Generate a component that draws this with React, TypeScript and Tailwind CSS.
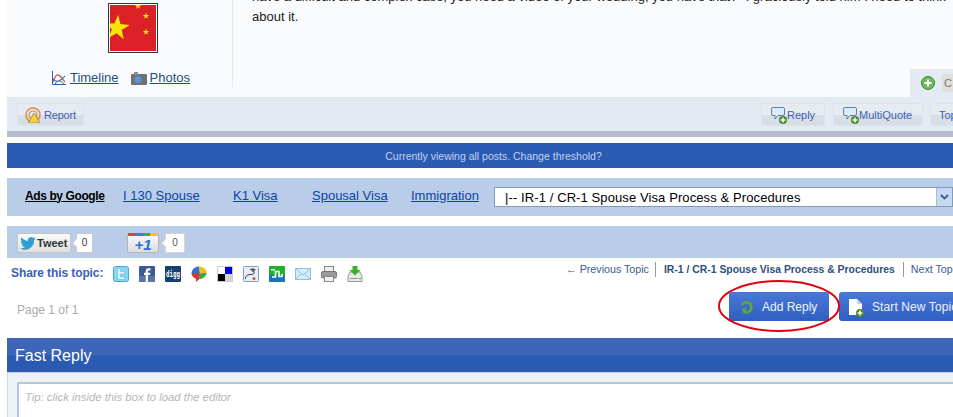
function PlusDot({ size = 9 }: { size?: number }) {
  return (
    <svg width={size} height={size} viewBox="0 0 10 10" className="absolute -bottom-0.5 -right-0.5">
      <circle cx="5" cy="5" r="5" fill="#4c8a2e" />
      <path d="M5 2v6M2 5h6" stroke="#fff" strokeWidth="1.800" />
    </svg>
  )
}

function BubbleIcon() {
  return (
    <span className="relative block w-[14px] h-[15px]">
      <svg width="14" height="13" viewBox="0 0 14 13">
        <path d="M2 .5h10a1.500 1.500 0 0 1 1.500 1.500v5a1.500 1.500 0 0 1-1.500 1.500H7l-3 3.500V8.500H2A1.500 1.500 0 0 1 .5 7V2A1.500 1.500 0 0 1 2 .5z" fill="#dcebfa" stroke="#5d7fa8" />
      </svg>
      <PlusDot size={8} />
    </span>
  )
}

function BarButton({ label, icon, className = '' }: { label: string; icon?: React.ReactNode; className?: string }) {
  return (
    <div className={`h-[23px] rounded-[3px] border border-[#dde3ea] bg-[linear-gradient(#e6ebf2_0,#e6ebf2_50%,#d7dee6_50%,#d7dee6_100%)] flex items-center text-[11px] text-[#3c5fb5] shrink-0 ${className}`}>
      {icon}
      <span className="pt-px">{label}</span>
    </div>
  )
}

function CountBubble({ className = '', color = 'text-[#333]' }: { className?: string; color?: string }) {
  return (
    <div className={`relative h-[20px] bg-white border border-[#c8c8c8] text-center text-[10px] leading-[18px] ${color} ${className}`}>
      <span className="absolute -left-[4px] top-[6px] w-[6px] h-[6px] rotate-45 bg-white border-l border-b border-[#c8c8c8]" />
      <span className="relative">0</span>
    </div>
  )
}

const starPath = 'M0-10 2.350-3.240 9.510-3.090 3.800 1.240 5.880 8.090 0 4-5.880 8.090-3.800 1.240-9.510-3.090-2.350-3.240Z'

const shareIcons = [
  <svg key="tw" viewBox="0 0 16 16" width="16" height="16"><rect x=".5" y=".5" width="15" height="15" rx="2" fill="#86d6f5" stroke="#4aa5d4" /><path d="M4.500 2.500h2.700v3h4.300v2.500H7.200v2c0 .7.400 1 1 1h3.300v2.500H7.500c-2 0-3-1.200-3-3z" fill="#dff5fd" stroke="#55b5dd" strokeWidth=".5" /></svg>,
  <svg key="fb" viewBox="0 0 16 16" width="16" height="16"><rect width="16" height="16" rx="1" fill="#3b5a96" /><rect y="10" width="16" height="6" fill="#5a74a8" /><path d="M9 16V9h2.200l.3-2.300H9V5.400c0-.7.300-1 1.100-1h1.400V2.200H9.600C7.600 2.200 6.700 3.300 6.700 5v1.700H5V9h1.700v7z" fill="#fff" /></svg>,
  <svg key="dg" viewBox="0 0 16 16" width="16" height="16"><rect width="16" height="16" rx="1" fill="#16406f" /><text x="8" y="11" textAnchor="middle" fontSize="8" fontWeight="700" fill="#fff" fontFamily="'DejaVu Sans Mono',monospace" textLength="14" lengthAdjust="spacingAndGlyphs">digg</text></svg>,
  <svg key="gb" viewBox="0 0 16 16" width="16" height="16"><path d="M.5 7.500C.5 3.500 4 .5 8 .5l1 6.500-5 4.500C2 10.500.5 9.500.5 7.500z" fill="#2f6fd8" /><path d="M8 .5c4 0 7.500 2.500 7.500 6L9 7.500z" fill="#f6c20f" /><path d="M15.500 6.500c0 3.500-3 6.500-7 6.500L9 7.500z" fill="#3da543" /><path d="M.8 7 9 7.500 8.500 13l-3.500 3v-3.300C2.500 12 1 10 .8 7z" fill="#d6392c" /></svg>,
  <svg key="de" viewBox="0 0 16 16" width="16" height="16"><rect x=".5" y=".5" width="15" height="15" fill="#fff" stroke="#ccc" /><rect x="8" y="1" width="7" height="7" fill="#0000e0" /><rect x="1" y="8" width="7" height="7" fill="#000" /><rect x="8" y="8" width="7" height="7" fill="#d4d4d4" /></svg>,
  <svg key="rd" viewBox="0 0 16 16" width="16" height="16"><rect x=".5" y=".5" width="15" height="15" rx="1" fill="#e6eff7" stroke="#7f9db9" /><path d="M2.500 13c0-4 3-4.500 5.500-4.500s3.500-1 3-3M7 4c1-1.500 4-1.500 5.500 0M10 3.500a1 1 0 1 0 .1 0" fill="none" stroke="#333" /><circle cx="11" cy="12.500" r="1.500" fill="#e8541e" /></svg>,
  <svg key="su" viewBox="0 0 16 16" width="16" height="16"><rect width="16" height="16" rx="1" fill="#1fb02c" /><rect y="9" width="16" height="7" fill="#1a74b8" /><path d="M3 11h3.500V5.500H10v5h3V8" fill="none" stroke="#fff" strokeWidth="1.600" /><rect x="2" y="3" width="4" height="1.500" fill="#fff" /></svg>,
  <svg key="ml" viewBox="0 0 16 16" width="16" height="16"><rect x=".5" y="2.500" width="15" height="11" fill="#d6ecfa" stroke="#8dc0e2" /><path d="M1 3l7 6 7-6M1 13l5-5M15 13l-5-5" fill="none" stroke="#8dc0e2" /></svg>,
  <svg key="pr" viewBox="0 0 16 16" width="16" height="16"><rect x="3.500" y=".5" width="9" height="5" fill="#eee" stroke="#888" /><rect x=".5" y="5.500" width="15" height="6.500" rx="1.500" fill="#9a9a9a" stroke="#777" /><rect x="3.500" y="10.500" width="9" height="5" fill="#f2f2f2" stroke="#888" /></svg>,
  <svg key="dl" viewBox="0 0 16 16" width="16" height="16"><path d="M1 10l2-4h10l2 4v5.500H1z" fill="#e8e8e8" stroke="#999" /><path d="M5.500 0h5v4h3L8 9.500 2.500 4h3z" fill="#3fae2a" /><rect x="3" y="12" width="8" height="1" fill="#999" /><rect x="12" y="12" width="2" height="1" fill="#3fae2a" /></svg>,
]

const adLinks = [
  { label: 'I 130 Spouse', cls: 'w-[110px]' },
  { label: 'K1 Visa', cls: 'w-[79px]' },
  { label: 'Spousal Visa', cls: 'w-[99px]' },
  { label: 'Immigration', cls: 'w-[83px]' },
]

export default function App() {
  return (
    <div className="relative w-[953px] h-[417px] overflow-hidden bg-white pl-[7px] font-['Liberation_Sans',Arial,sans-serif]">
      <div className="w-[960px]">
        {/* Post */}
        <div className="h-[97px] bg-[#fafbfd] flex relative overflow-hidden">
          <div className="w-[226px] h-[87px] border-r border-[#e4e9f0] shrink-0 flex flex-col items-center">
            <div className="mt-[3px] ml-[26px] w-[50px] h-[50px] border border-[#33363b] p-px bg-white">
              <svg viewBox="0 0 46 46" className="w-full h-full block">
                <rect width="46" height="46" fill="#dc2126" />
                <path d={starPath} fill="#f6e60e" transform="translate(7 23) scale(1.300) rotate(5)" />
                <path d={starPath} fill="#f6e60e" transform="translate(36 11) scale(.34)" />
                <path d={starPath} fill="#f6e60e" transform="translate(36 27) scale(.34)" />
                <path d={starPath} fill="#f6e60e" transform="translate(28 1) scale(.34)" />
              </svg>
            </div>
            <div className="mt-[18px] ml-[3px] flex items-center text-[13px] leading-[14px] text-[#1f4f82]">
              <svg width="14" height="14" viewBox="0 0 14 14" className="mr-[4px]">
                <path d="M.5 0v13.500H14" fill="none" stroke="#2a5fa8" />
                <path d="M1 11c2-6 4-9 7-6s3 4 5 6" fill="none" stroke="#d94c3a" strokeWidth="1.200" />
                <path d="M1 8c2 2 5 5 12-3" fill="none" stroke="#3f7fd0" strokeWidth="1.200" />
                <path d="M3 13c2-4 6-4 9 0" fill="none" stroke="#5fa34a" strokeWidth="1.200" />
              </svg>
              <span className="underline">Timeline</span>
              <svg width="16" height="13" viewBox="0 0 16 13" className="ml-[12px] mr-[3px]">
                <rect y="2" width="16" height="11" rx="1" fill="#6e7175" />
                <rect x="3" width="4" height="3" fill="#8b8e92" />
                <circle cx="7" cy="7.500" r="3.500" fill="#5b93d8" />
              </svg>
              <span className="underline">Photos</span>
            </div>
          </div>
          <div className="pl-[19px] -mt-[13px] w-[720px] shrink-0 text-[13px] leading-[20px] text-[#222]">
            <p className="whitespace-nowrap">have a difficult and complex case, you need a video of your wedding, you have that?" I graciously told him I need to think</p>
            <p>about it.</p>
          </div>
          <div className="absolute left-[903px] top-[69px] w-[57px] h-[28px] bg-[#e4eaf2] flex items-center pl-[11px]">
            <svg width="14" height="14" viewBox="0 0 14 14">
              <circle cx="7" cy="7" r="6.500" fill="#6cb85c" stroke="#3d8a33" />
              <path d="M7 3.500v7M3.500 7h7" stroke="#fff" strokeWidth="2" />
            </svg>
            <span className="ml-[7px] w-[20px] h-[18px] bg-[#e2dedb] text-[11px] leading-[18px] pl-[2px] text-[#777]">C</span>
          </div>
        </div>

        {/* Post controls */}
        <div className="h-[34px] bg-[#e4eaf2] flex items-start pt-[6px] pl-[10px]">
          <BarButton
            className="w-[67px] pl-[7px] gap-[2px] tracking-[-0.2px]"
            label="Report"
            icon={
              <svg width="17" height="16" viewBox="0 0 17 16">
                <circle cx="8" cy="8" r="7" fill="none" stroke="#d98a45" strokeWidth="1.500" />
                <circle cx="8" cy="8" r="4" fill="none" stroke="#d98a45" strokeWidth="1.200" />
                <path d="M9 6l6 10H3z" fill="#f5cf3d" stroke="#7a6a2b" strokeWidth=".6" />
              </svg>
            }
          />
          <div className="flex-1" />
          <BarButton className="w-[64px] pl-[9px] gap-[2px] mr-[8px]" label="Reply" icon={<BubbleIcon />} />
          <BarButton className="w-[90px] pl-[9px] gap-[2px] mr-[7px]" label="MultiQuote" icon={<BubbleIcon />} />
          <BarButton className="w-[37px] pl-[8px] overflow-hidden whitespace-nowrap" label="Top" />
        </div>
        <div className="h-[6px] bg-[#b3bdcb]" />

        <div className="mt-[6px] h-[25px] bg-[#2b5ab2] pl-[13px] text-center text-[10.5px] leading-[26px] text-[#c0d2ee]">
          Currently viewing all posts. Change threshold?
        </div>

        {/* Ads and forum jump */}
        <div className="mt-[10px] h-[38px] bg-[#b9cde8] flex items-center pl-[18px] text-[13px]">
          <span className="w-[98px] shrink-0 text-[12px] font-bold text-black underline tracking-[-0.4px] pb-[3px]">Ads by Google</span>
          {adLinks.map((ad) => (
            <span key={ad.label} className={`${ad.cls} shrink-0 text-[#0f3fa8] underline pb-[3px]`}>{ad.label}</span>
          ))}
          <div className="w-[459px] h-[20px] shrink-0 bg-white border border-[#7f9db9] flex items-center pl-[10px] pt-px text-[13px] tracking-[0.1px] text-black whitespace-nowrap relative overflow-hidden">
            |-- IR-1 / CR-1 Spouse Visa Process &amp; Procedures
            <span className="absolute right-0 top-0 bottom-0 w-[16px] bg-[#c7d8f0] border-l border-[#a9bfdc] flex items-center justify-center">
              <svg width="9" height="6" viewBox="0 0 9 6"><path d="M1 1l3.500 3.500L8 1" fill="none" stroke="#3a5a8c" strokeWidth="1.800" /></svg>
            </span>
          </div>
        </div>

        {/* Social buttons */}
        <div className="mt-[10px] h-[32px] bg-[#b9cde8] flex items-center pt-[2px] pl-[10px]">
          <div className="w-[54px] h-[20px] rounded-[2px] bg-[linear-gradient(#fafafa,#dedede)] border border-[#c5c5c5] flex items-center pl-[2px] text-[11px] font-bold text-[#333]">
            <svg width="16" height="13" viewBox="0 0 24 20" className="mr-px">
              <path d="M24 2.400c-.9.400-1.800.7-2.800.8 1-.6 1.800-1.600 2.200-2.700-1 .6-2 1-3.100 1.200A4.900 4.900 0 0 0 11.900 6C7.800 5.800 4.200 3.900 1.700.9c-1.300 2.200-.6 5.100 1.500 6.500-.8 0-1.500-.2-2.200-.6 0 2.300 1.600 4.400 3.900 4.900-.7.200-1.500.2-2.200.1.600 2 2.400 3.400 4.600 3.400A9.900 9.900 0 0 1 0 17.200 14 14 0 0 0 21.500 4.800c1-.7 1.800-1.500 2.500-2.400z" fill="#2f9fd0" />
            </svg>
            Tweet
          </div>
          <CountBubble className="ml-[5px] w-[17px]" />
          <div className="ml-[34px] w-[32px] h-[20px] rounded-[2px] border border-[#b5b5b5] bg-[linear-gradient(#fbfbfb,#dcdcdc)] relative text-center text-[15px] leading-[22px] font-bold italic text-[#2a6fd6]">
            <span className="absolute left-0 right-0 -top-px h-[3px] bg-[linear-gradient(90deg,#d8403a_0,#d8403a_25%,#3a80d8_25%,#3a80d8_50%,#4aa548_50%,#4aa548_75%,#f2c230_75%)]" />
            +1
          </div>
          <CountBubble className="ml-[6px] w-[20px] border-[#d5d5d5]" color="text-[#555]" />
        </div>

        {/* Share row */}
        <div className="h-[30px] flex items-start pt-[7px] pl-[4px]">
          <span className="w-[102px] shrink-0 text-[12px] font-bold leading-[16px] text-[#3a5fb8] tracking-[-0.1px]">Share this topic:</span>
          <div className="flex gap-[10px] pt-px shrink-0">
            {shareIcons.map((icon, i) => <span key={i} className="w-4 h-4 shrink-0 block">{icon}</span>)}
          </div>
          <div className="ml-[203px] -mt-[3px] flex items-center text-[10.7px] text-[#3c5a8a] whitespace-nowrap leading-[15px]">
            <span className="pr-[6px] border-r border-[#999]">← Previous Topic</span>
            <span className="px-[8px] border-r border-[#999] font-bold text-[10.4px] text-[#2f4f80]">IR-1 / CR-1 Spouse Visa Process &amp; Procedures</span>
            <span className="pl-[7px]">Next Topic →</span>
          </div>
        </div>

        {/* Page row */}
        <div className="h-[50px] flex items-start pl-[10px]">
          <span className="mt-[14px] w-[712px] shrink-0 text-[12px] leading-[16px] text-[#aaa]">Page 1 of 1</span>
          <div className="mt-[4px] w-[100px] h-[29px] shrink-0 rounded-[3px] bg-[linear-gradient(#4a78da,#2f5fc0)] flex items-center pl-[11px] text-[12px] text-[#eef3fb]">
            <svg width="13" height="14" viewBox="0 0 13 14" className="mr-[9px]">
              <path d="M2 5a5 5 0 1 1 1 6" fill="none" stroke="#5aa83e" strokeWidth="2.600" />
              <path d="M6 13 1.500 9.500 6 7.500z" fill="#5aa83e" />
            </svg>
            Add Reply
          </div>
          <div className="ml-[10px] mt-[4px] w-[130px] h-[29px] shrink-0 rounded-[3px] bg-[linear-gradient(#4a78da,#2f5fc0)] flex items-center pl-[10px] text-[12px] text-[#eef3fb] whitespace-nowrap tracking-[0.1px]">
            <span className="relative block w-[13px] h-[16px] mr-[10px]">
              <svg width="13" height="16" viewBox="0 0 13 16" className="block"><path d="M0 0h8l5 5v11H0z" fill="#fff" /><path d="M8 0v5h5z" fill="#c9d4e4" /></svg>
              <PlusDot size={8} />
            </span>
            Start New Topic
          </div>
        </div>

        {/* Fast reply */}
        <div className="h-[35px] bg-[linear-gradient(#3d65b8_0,#3d65b8_50%,#2b5ab2_50%,#2b5ab2_100%)] pl-[8px] text-[16px] leading-[35px] text-white border-b border-[#c5d3e5]">
          Fast Reply
        </div>
        <div className="h-[44px] bg-[#edf2f7] border-l border-[#cdd8e4] pl-[9px] pt-[9px]">
          <div className="h-[40px] bg-white border-t-2 border-l-2 border-[#b6c6d6] pl-[6px] pt-[6px] text-[11.3px] leading-[14px] italic text-[#b5b5b5]">
            Tip: click inside this box to load the editor
          </div>
        </div>
      </div>

      {/* Red hand-drawn circle on the screenshot */}
      <svg width="124" height="54" viewBox="0 0 124 54" className="absolute left-[717px] top-[279px]" fill="none">
        <ellipse cx="62" cy="27" rx="60" ry="25" stroke="#e2000f" strokeWidth="2" />
      </svg>
    </div>
  )
}
